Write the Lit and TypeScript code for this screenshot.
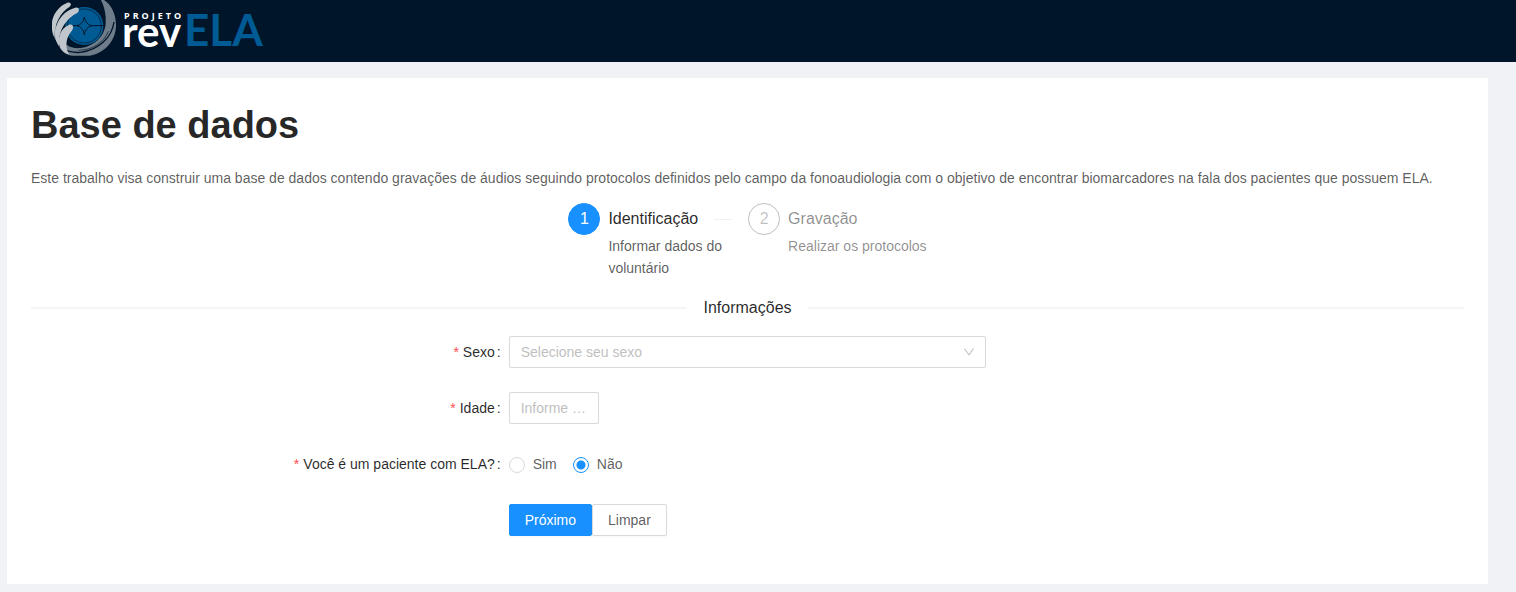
import { LitElement, html, css, svg } from "lit";
import { customElement, property, state } from "lit/decorators.js";
import { classMap } from "lit/directives/class-map.js";

@customElement("revela-logo")
class RevelaLogo extends LitElement {
  static styles = css`
    :host {
      display: block;
    }
    svg {
      display: block;
    }
    .word {
      font: 700 44px Lato, sans-serif;
    }
    .small {
      font: 700 9px "Open Sans", sans-serif;
      letter-spacing: 3px;
      fill: #ffffff;
    }
    .rev {
      font-size: 42px;
      fill: #ffffff;
    }
    .ela {
      fill: #005b94;
    }
  `;

  render() {
    return html`
      <svg width="224" height="62" viewBox="0 0 224 62" role="img" aria-label="Projeto revELA">
        <g transform="translate(-12 0) scale(0.33333)">
          ${svg`
          <path fill="#6f7d8b" d="M183 0C194 22 199 46 197 72C193 112 160 140 120 144C100 146 84 140 72 128L58 140C66 156 80 165 98 167H150C194 160 228 122 228 76C228 42 214 14 192 0Z"/>
          <path fill="none" stroke="#001529" stroke-width="4" d="M222 66C216 112 176 150 122 157C100 159 82 154 66 144"/>
          <path fill="none" stroke="#001529" stroke-width="2" d="M205 94C190 130 156 150 116 151"/>
          <circle cx="133" cy="78" r="57" fill="#005b94"/>
          <circle cx="133" cy="78" r="51" fill="none" stroke="#001529" stroke-width="2"/>
          <path fill="none" stroke="#001529" stroke-width="3" d="M82 77H110C122 75 131 66 133 51C135 66 144 75 157 77H190M110 77C122 79 131 89 133 104C135 89 144 79 157 77"/>
          <path fill="#8b98a4" d="M44 46C36 62 35 96 44 114C48 124 54 132 60 137C51 118 45 92 48 66Z"/>
          <path fill="#c1c6cc" d="M82 8C62 16 44 34 37 60C34 80 36 98 42 110C43 92 47 72 56 56C64 40 76 28 89 20C96 14 92 5 82 8Z"/>
          <path fill="#c1c6cc" d="M106 23C76 30 50 58 45 94C44 114 50 130 58 140C54 118 60 92 74 72C84 57 98 46 110 40C121 33 118 21 106 23Z"/>
          <path fill="#c1c6cc" d="M86 75C64 84 52 110 58 136C64 152 74 161 88 164C76 146 76 118 92 97C106 82 98 70 86 75Z"/>
          `}
        </g>
        <text class="small" x="72" y="19">PROJETO</text>
        <text class="word rev" x="70" y="47">rev</text>
        <text class="word ela" x="132" y="46">ELA</text>
      </svg>
    `;
  }
}

@customElement("step-item")
class StepItem extends LitElement {
  @property({ type: Number }) number = 1;
  @property() heading = "";
  @property() description = "";
  @property({ type: Boolean, reflect: true }) active = false;
  @property({ type: Boolean, reflect: true }) last = false;

  static styles = css`
    :host {
      display: flex;
      gap: 8px;
      flex: 1;
      min-width: 0;
      color: rgba(0, 0, 0, 0.45);
    }
    :host([last]) {
      flex: none;
    }
    .badge {
      box-sizing: border-box;
      flex: none;
      width: 32px;
      height: 32px;
      border: 1px solid rgba(0, 0, 0, 0.25);
      border-radius: 50%;
      font-size: 16px;
      line-height: 30px;
      text-align: center;
      color: rgba(0, 0, 0, 0.25);
    }
    .badge.on {
      background: #1890ff;
      border-color: #1890ff;
      color: #ffffff;
    }
    .content {
      flex: 1;
      min-width: 0;
    }
    .title {
      display: flex;
      align-items: center;
      gap: 16px;
      font-size: 16px;
      line-height: 32px;
    }
    .title.on {
      color: rgba(0, 0, 0, 0.85);
    }
    .tail {
      flex: 1;
      height: 1px;
      background: #f0f0f0;
    }
    .description {
      max-width: 140px;
      line-height: 22px;
    }
    .description.on {
      color: rgba(0, 0, 0, 0.65);
    }
  `;

  render() {
    const on = this.active;
    return html`
      <div class=${classMap({ badge: true, on })}>${this.number}</div>
      <div class="content">
        <div class=${classMap({ title: true, on })}>
          <span>${this.heading}</span>
          ${this.last ? null : html`<span class="tail"></span>`}
        </div>
        <div class=${classMap({ description: true, on })}>${this.description}</div>
      </div>
    `;
  }
}

@customElement("app-root")
class AppRoot extends LitElement {
  @state() private patient = "nao";

  static styles = css`
    :host {
      display: flex;
      flex-direction: column;
      min-height: 100vh;
      box-sizing: border-box;
      background: #f0f2f5;
      font-family: "Liberation Sans", Arial, sans-serif;
      font-size: 14px;
      line-height: 22px;
      color: rgba(0, 0, 0, 0.65);
    }
    * {
      box-sizing: border-box;
    }
    .header {
      background: #001529;
      padding: 0 52px;
      overflow: hidden;
    }
    .card {
      margin: 16px 28px 8px 7px;
      padding: 24px;
      background: #ffffff;
    }
    h1 {
      margin: 0 0 18px;
      font-size: 38px;
      line-height: 47px;
      font-weight: 600;
      color: rgba(0, 0, 0, 0.85);
    }
    p {
      margin: 0 0 14px;
    }
    .steps {
      display: flex;
      gap: 16px;
      width: 25%;
      min-width: 340px;
      margin: 0 auto;
    }
    .divider {
      display: flex;
      align-items: center;
      gap: 16px;
      margin: 16px 0;
      font-size: 16px;
      line-height: 25px;
      font-weight: 400;
      color: rgba(0, 0, 0, 0.85);
    }
    .divider::before,
    .divider::after {
      content: "";
      flex: 1;
      height: 2px;
      background: #f5f5f5;
    }
    .row {
      display: grid;
      grid-template-columns: 1fr 1fr 1fr;
      align-items: center;
      min-height: 32px;
      margin-bottom: 24px;
    }
    .label {
      text-align: right;
      color: rgba(0, 0, 0, 0.85);
      white-space: nowrap;
    }
    .label::before {
      content: "*";
      margin-right: 4px;
      color: #ff4d4f;
    }
    .label::after {
      content: ":";
      margin: 0 8px 0 2px;
    }
    .field {
      grid-column: 2;
      display: flex;
      align-items: center;
    }
    .select {
      display: grid;
      flex: 1;
      align-items: center;
    }
    .select > * {
      grid-area: 1 / 1;
    }
    .arrow {
      justify-self: end;
      margin-right: 11px;
      fill: rgba(0, 0, 0, 0.25);
      pointer-events: none;
    }
    select,
    .age {
      height: 32px;
      padding: 0 11px;
      border: 1px solid #d9d9d9;
      border-radius: 2px;
      background: #ffffff;
      font: inherit;
      color: #bfbfbf;
      outline: none;
    }
    select {
      appearance: none;
      width: 100%;
    }
    select:valid,
    .age {
      color: rgba(0, 0, 0, 0.65);
    }
    .age {
      width: 90px;
      text-overflow: ellipsis;
    }
    .age::placeholder {
      color: #bfbfbf;
      opacity: 1;
    }
    select:focus,
    .age:focus {
      border-color: #40a9ff;
    }
    .radios {
      gap: 16px;
    }
    .radio {
      display: flex;
      align-items: center;
      gap: 8px;
    }
    .radio input {
      appearance: none;
      width: 16px;
      height: 16px;
      margin: 2px 0 0;
      border: 1px solid #d9d9d9;
      border-radius: 50%;
      background: #ffffff;
    }
    .radio input:checked {
      border-color: #1890ff;
      background: radial-gradient(circle, #1890ff 4px, #ffffff 5px);
    }
    button {
      height: 32px;
      padding: 0 15px;
      border: 1px solid #d9d9d9;
      border-radius: 2px;
      background: #ffffff;
      box-shadow: 0 2px 0 rgba(0, 0, 0, 0.02);
      font: inherit;
      color: rgba(0, 0, 0, 0.65);
      cursor: pointer;
    }
    .primary {
      border-color: #1890ff;
      background: #1890ff;
      color: #ffffff;
    }
  `;

  private pick(value: string) {
    this.patient = value;
  }

  render() {
    return html`
      <header class="header"><revela-logo></revela-logo></header>
      <main class="card">
        <h1>Base de dados</h1>
        <p>
          Este trabalho visa construir uma base de dados contendo gravações de áudios seguindo
          protocolos definidos pelo campo da fonoaudiologia com o objetivo de encontrar
          biomarcadores na fala dos pacientes que possuem ELA.
        </p>
        <div class="steps">
          <step-item active number="1" heading="Identificação" description="Informar dados do voluntário"></step-item>
          <step-item last number="2" heading="Gravação" description="Realizar os protocolos"></step-item>
        </div>
        <h2 class="divider">Informações</h2>
        <form @submit=${(e: Event) => e.preventDefault()} @reset=${() => this.pick("nao")}>
          <div class="row">
            <label class="label" for="sexo">Sexo</label>
            <div class="field">
              <div class="select">
                <select id="sexo" required>
                  <option value="" disabled selected hidden>Selecione seu sexo</option>
                  <option value="f">Feminino</option>
                  <option value="m">Masculino</option>
                </select>
                <svg class="arrow" width="12" height="12" viewBox="64 64 896 896" aria-hidden="true">
                  <path d="M884 256h-75c-5.1 0-9.9 2.5-12.9 6.6L512 654.2 227.9 262.6c-3-4.1-7.8-6.6-12.9-6.6h-75c-6.5 0-10.3 7.4-6.5 12.7l352.6 486.1c12.8 17.6 39 17.6 51.7 0l352.6-486.1c3.9-5.3.1-12.7-6.4-12.7z" />
                </svg>
              </div>
            </div>
          </div>
          <div class="row">
            <label class="label" for="idade">Idade</label>
            <div class="field">
              <input class="age" id="idade" type="text" inputmode="numeric" placeholder="Informe sua idade" />
            </div>
          </div>
          <div class="row" role="radiogroup" aria-labelledby="ela">
            <span class="label" id="ela">Você é um paciente com ELA?</span>
            <div class="field radios">
              <label class="radio">
                <input type="radio" name="ela" .checked=${this.patient === "sim"} @change=${() => this.pick("sim")} />
                Sim
              </label>
              <label class="radio">
                <input type="radio" name="ela" .checked=${this.patient === "nao"} @change=${() => this.pick("nao")} />
                Não
              </label>
            </div>
          </div>
          <div class="row">
            <div class="field">
              <button class="primary" type="submit">Próximo</button>
              <button type="reset">Limpar</button>
            </div>
          </div>
        </form>
      </main>
    `;
  }
}
